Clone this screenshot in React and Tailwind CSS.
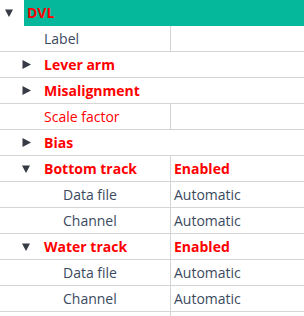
import React from 'react';

const rows = [
  { label: 'Label', level: 1 },
  { label: 'Lever arm', level: 1, caret: 'right', bold: true, group: true },
  { label: 'Misalignment', level: 1, caret: 'right', bold: true, group: true },
  { label: 'Scale factor', level: 1, red: true },
  { label: 'Bias', level: 1, caret: 'right', bold: true, group: true },
  { label: 'Bottom track', level: 1, caret: 'down', bold: true, value: 'Enabled', valueBold: true },
  { label: 'Data file', level: 2, value: 'Automatic' },
  { label: 'Channel', level: 2, value: 'Automatic' },
  { label: 'Water track', level: 1, caret: 'down', bold: true, value: 'Enabled', valueBold: true },
  { label: 'Data file', level: 2, value: 'Automatic' },
  { label: 'Channel', level: 2, value: 'Automatic' },
];

const Caret = ({ dir }) =>
  dir === 'down' ? (
    <svg width="8" height="8" viewBox="0 0 8 8">
      <polygon points="0,0.5 8,0.5 4,8" fill="#363b46" />
    </svg>
  ) : (
    <svg width="9" height="9" viewBox="0 0 9 9">
      <polygon points="0.5,0 9,4.5 0.5,9" fill="#363b46" />
    </svg>
  );

const Row = ({ row }) => {
  const labelCls = row.bold
    ? 'font-bold text-[#ff0000]'
    : row.red
    ? 'text-[#ff0000]'
    : 'text-[#3b4a60]';
  return (
    <div className="flex h-[26px] border-b border-[#d4d4d4]">
      <div className="flex items-center w-[170px] shrink-0">
        <div className="w-[44px] shrink-0 flex items-center">
          {row.caret && <span className="ml-[22px] flex"><Caret dir={row.caret} /></span>}
        </div>
        <span className={`${labelCls} ${row.level === 2 ? 'ml-[19px]' : ''}`}>{row.label}</span>
      </div>
      {!row.group && (
        <div className="flex items-center flex-1 border-l border-[#d4d4d4] pl-[3px]">
          {row.value && (
            <span className={row.valueBold ? 'font-bold text-[#ff0000]' : 'text-[#3b4a60]'}>
              {row.value}
            </span>
          )}
        </div>
      )}
    </div>
  );
};

export default function App() {
  return (
    <div
      className="w-[304px] h-[316px] overflow-hidden bg-white text-[14px] leading-none"
      style={{ fontFamily: '"Open Sans", "Noto Sans", sans-serif' }}
    >
      <div className="flex h-[26px]">
        <div className="w-[24px] flex items-center pl-[5px]">
          <Caret dir="down" />
        </div>
        <div className="flex-1 bg-[#05b89c] flex items-center pl-[3px]">
          <span className="font-bold text-[#ff0000]">DVL</span>
        </div>
      </div>
      {rows.map((row, i) => (
        <Row key={i} row={row} />
      ))}
      <div className="flex h-[26px]">
        <div className="w-[170px]" />
        <div className="flex-1 border-l border-[#d4d4d4]" />
      </div>
    </div>
  );
}
